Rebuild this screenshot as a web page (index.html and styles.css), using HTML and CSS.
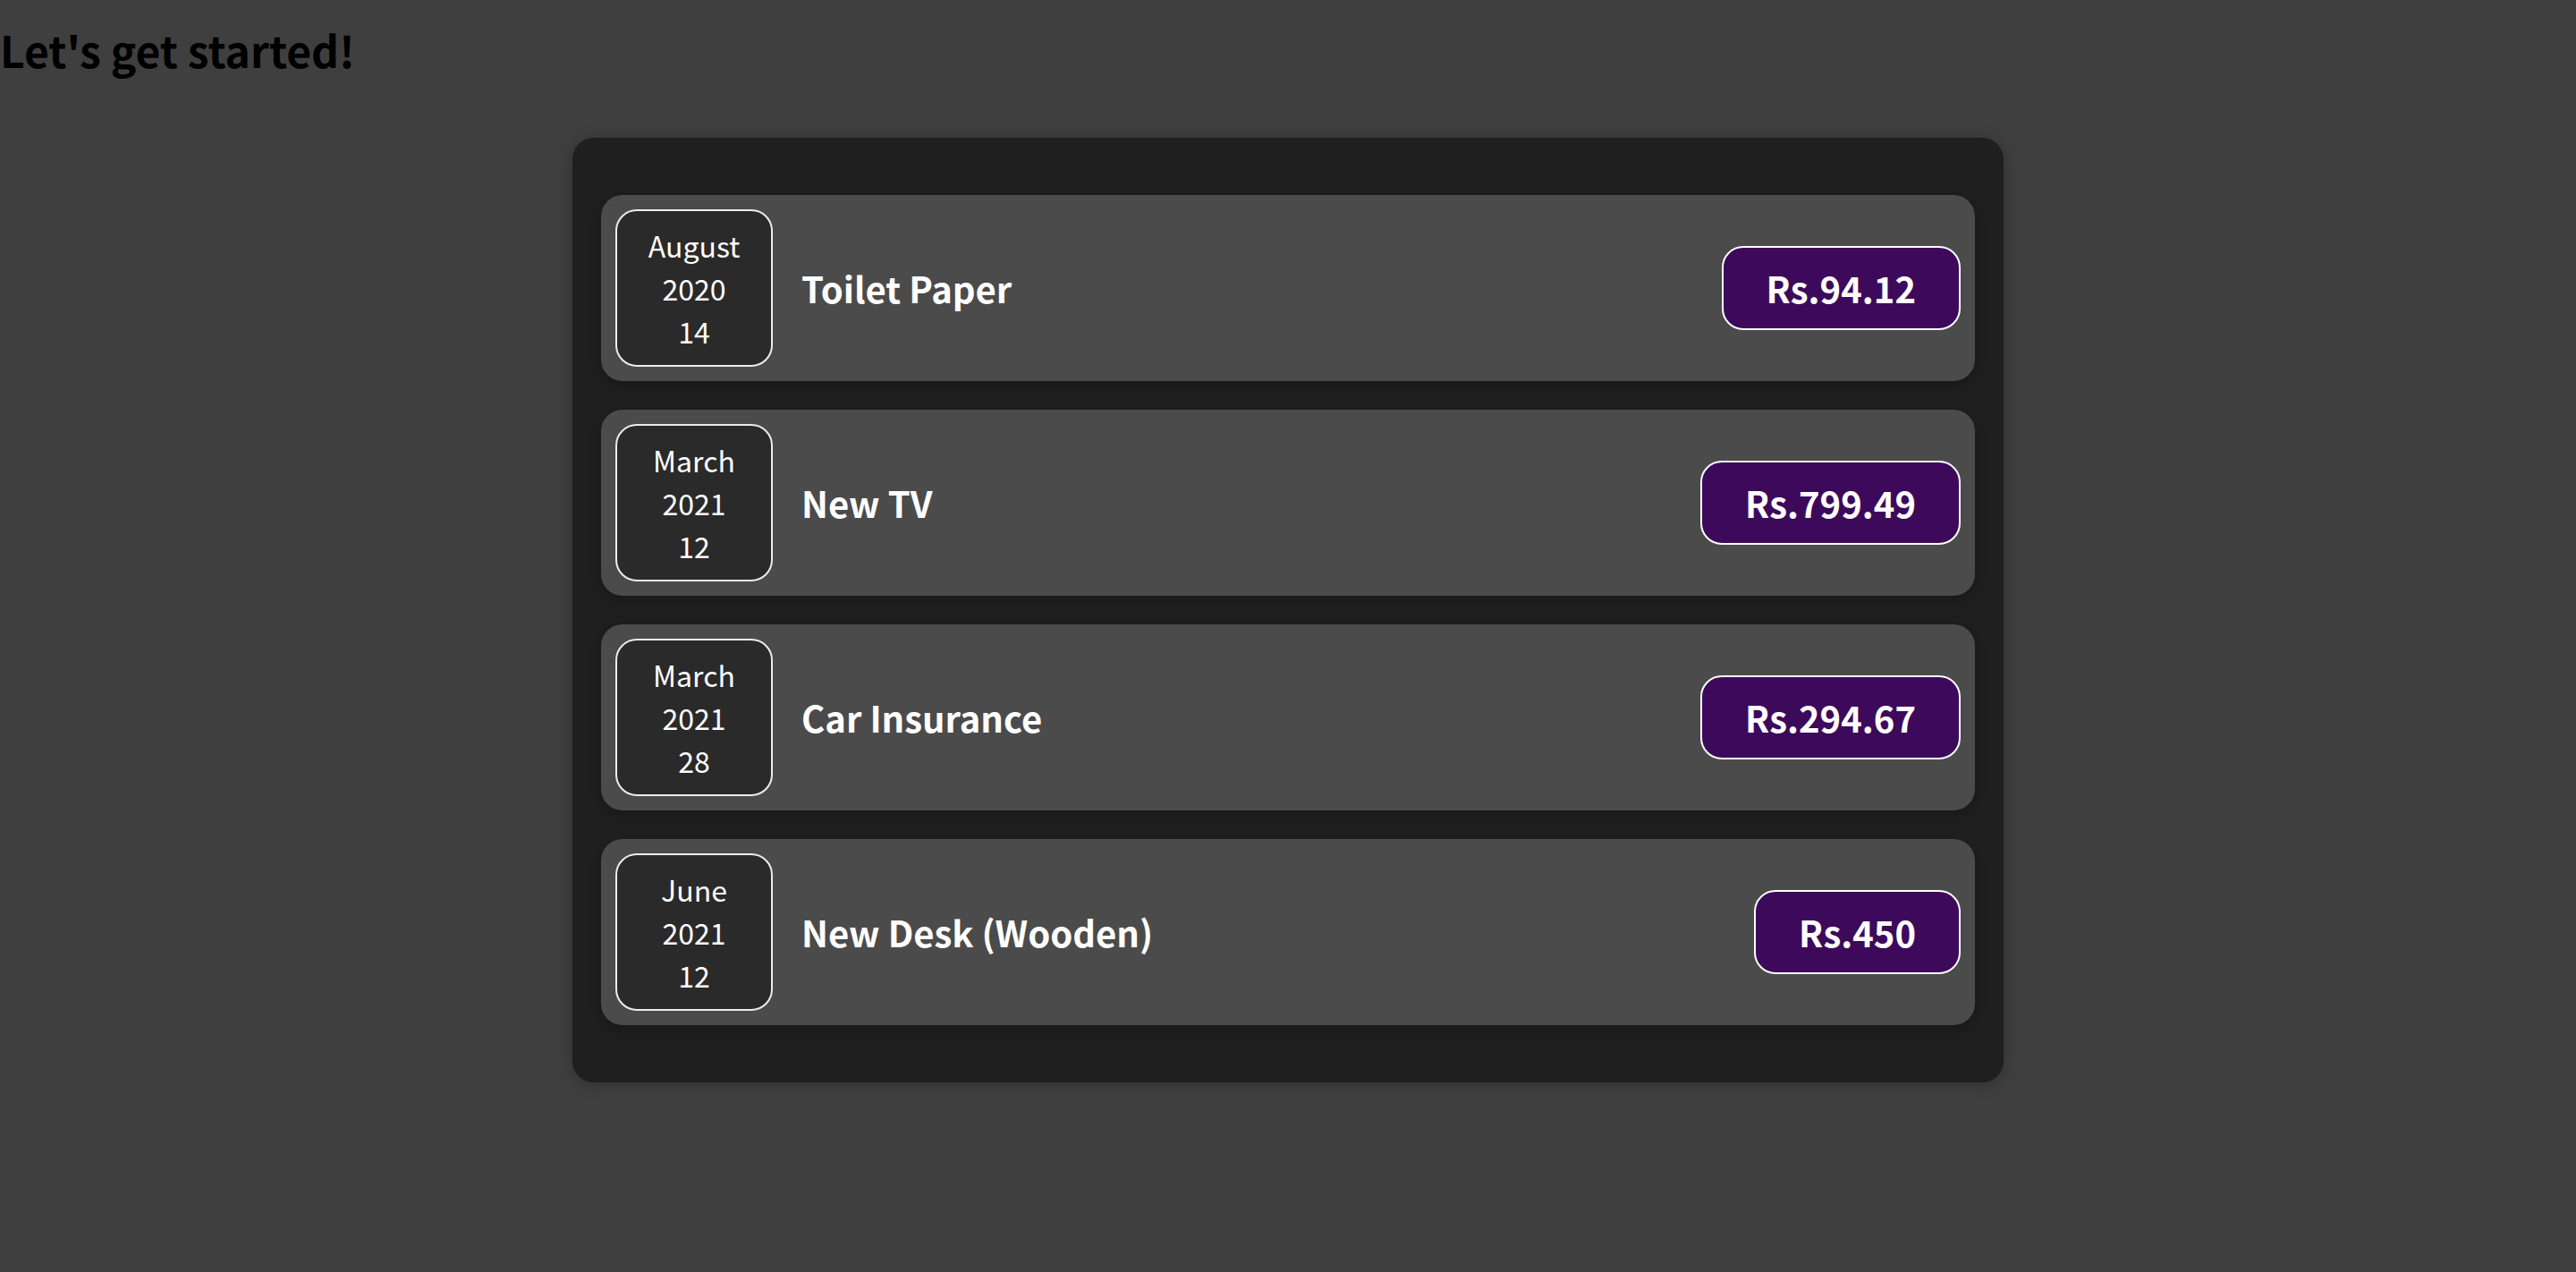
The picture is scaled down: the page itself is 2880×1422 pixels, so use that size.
FILE: index.html
```html
<!DOCTYPE html>
<html lang="en">
<head>
<meta charset="utf-8">
<title>Expenses</title>
<link rel="stylesheet" href="styles.css">
</head>
<body>
<h2 class="page-title">Let's get started!</h2>
<div class="expenses card">
  <div class="expense-item card">
    <div class="expense-date">
      <div class="expense-date__month">August</div>
      <div class="expense-date__year">2020</div>
      <div class="expense-date__day">14</div>
    </div>
    <div class="expense-item__description">
      <h2>Toilet Paper</h2>
      <div class="expense-item__price">Rs.94.12</div>
    </div>
  </div>
  <div class="expense-item card">
    <div class="expense-date">
      <div class="expense-date__month">March</div>
      <div class="expense-date__year">2021</div>
      <div class="expense-date__day">12</div>
    </div>
    <div class="expense-item__description">
      <h2>New TV</h2>
      <div class="expense-item__price">Rs.799.49</div>
    </div>
  </div>
  <div class="expense-item card">
    <div class="expense-date">
      <div class="expense-date__month">March</div>
      <div class="expense-date__year">2021</div>
      <div class="expense-date__day">28</div>
    </div>
    <div class="expense-item__description">
      <h2>Car Insurance</h2>
      <div class="expense-item__price">Rs.294.67</div>
    </div>
  </div>
  <div class="expense-item card">
    <div class="expense-date">
      <div class="expense-date__month">June</div>
      <div class="expense-date__year">2021</div>
      <div class="expense-date__day">12</div>
    </div>
    <div class="expense-item__description">
      <h2>New Desk (Wooden)</h2>
      <div class="expense-item__price">Rs.450</div>
    </div>
  </div>
</div>
</body>
</html>
```

FILE: styles.css
```css
html {
  font-family: "Noto Sans CJK JP", "Noto Sans", sans-serif;
}

body {
  margin: 0;
  background-color: #3f3f3f;
}

.page-title {
  margin: 20px 0 0;
  font-size: 48px;
  font-weight: bold;
  color: #000;
}

.card {
  border-radius: 24px;
  box-shadow: 0 2px 16px rgba(0, 0, 0, 0.25);
}

.expenses {
  box-sizing: border-box;
  width: 1600px;
  margin: 64px auto;
  padding: 32px;
  background-color: #1f1f1f;
}

.expense-item {
  display: flex;
  align-items: center;
  margin: 32px 0;
  padding: 16px;
  background-color: #4b4b4b;
  box-shadow: 0 4px 16px rgba(0, 0, 0, 0.25);
}

.expense-date {
  box-sizing: border-box;
  display: flex;
  flex-direction: column;
  align-items: center;
  justify-content: center;
  width: 176px;
  height: 176px;
  border: 2px solid #ececec;
  border-radius: 24px;
  background-color: #2a2a2a;
  color: #fff;
  font-size: 32px;
  line-height: 48px;
}

.expense-item__description {
  display: flex;
  flex: 1;
  align-items: center;
  justify-content: space-between;
}

.expense-item__description h2 {
  flex: 1;
  margin: 0 32px;
  color: #fff;
  font-size: 40px;
  font-weight: bold;
}

.expense-item__price {
  padding: 16px 48px;
  border: 2px solid #fff;
  border-radius: 24px;
  background-color: #3d0a5b;
  color: #fff;
  font-size: 40px;
  font-weight: bold;
}
```
